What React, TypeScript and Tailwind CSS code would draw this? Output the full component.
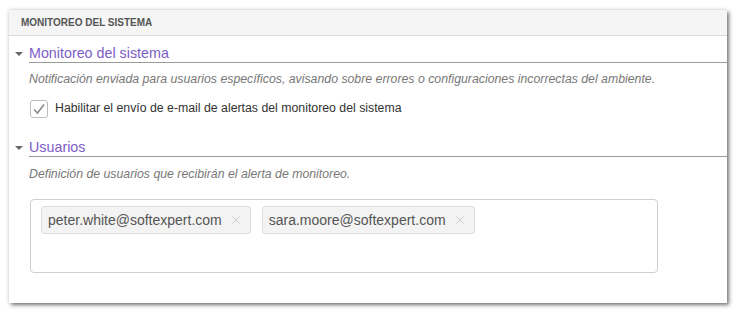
import React from 'react';

// Section header with collapse arrow and underline
const SectionTitle = ({ title }: { title: string }) => (
  <div className="flex items-end">
    <span className="w-[20px] pl-[6px] pb-[7px] flex">
      <span className="w-0 h-0 border-l-[4px] border-r-[4px] border-t-[4px] border-l-transparent border-r-transparent border-t-[#666]" />
    </span>
    <div className="flex-1 border-b border-[#9a9a9a] text-[14.3px] leading-[17px] text-[#7d5cc6]">{title}</div>
  </div>
);

const Tag = ({ email }: { email: string }) => (
  <div className="flex items-center h-[28px] pl-[6px] pr-[10px] rounded-[3px] border border-[#dcdcdc] bg-[#f3f3f3] text-[14px] text-[#555]">
    <span>{email}</span>
    <svg className="ml-[10px]" width="8" height="8" viewBox="0 0 8 8">
      <path d="M0.5 0.5 L7.5 7.5 M7.5 0.5 L0.5 7.5" stroke="#cfcfcf" strokeWidth="1" />
    </svg>
  </div>
);

export default function App() {
  return (
    <div className="w-[736px] h-[313px] bg-white pt-[10px] pl-[9px] pr-[9px] font-['Liberation_Sans',Arial,sans-serif]">
      <div className="h-[293px] bg-white shadow-[2px_2px_4px_rgba(0,0,0,0.55),-1px_-1px_4px_rgba(0,0,0,0.08)]">
        <div className="h-[26px] flex items-center pl-[12px] bg-[#f5f5f5] border-b border-[#dcdcdc] text-[10px] font-bold text-[#555]">
          MONITOREO DEL SISTEMA
        </div>

        <div className="pt-[9px]">
          <SectionTitle title="Monitoreo del sistema" />
          <div className="pl-[20px]">
            <p className="mt-[7px] text-[12.3px] italic text-[#777]">
              Notificación enviada para usuarios específicos, avisando sobre errores o configuraciones incorrectas del ambiente.
            </p>
            <label className="mt-[11px] flex items-center gap-[7px] text-[12.3px] text-[#333]">
              <span className="ml-[1px] w-[18px] h-[18px] rounded-[3px] border border-[#bdbdbd] bg-white flex items-center justify-center">
                <svg width="14" height="14" viewBox="0 0 14 14">
                  <path d="M2 7.5 L5.5 11 L12 2.5" fill="none" stroke="#8a8a8a" strokeWidth="1.6" />
                </svg>
              </span>
              Habilitar el envío de e-mail de alertas del monitoreo del sistema
            </label>
          </div>
        </div>

        <div className="pt-[21px]">
          <SectionTitle title="Usuarios" />
          <div className="pl-[20px]">
            <p className="mt-[8px] text-[12.3px] italic text-[#777]">
              Definición de usuarios que recibirán el alerta de monitoreo.
            </p>
            <div className="mt-[16px] ml-[1px] w-[628px] h-[74px] rounded-[4px] border border-[#cfcfcf] flex items-start gap-[11px] pt-[6px] pl-[10px]">
              <Tag email="peter.white@softexpert.com" />
              <Tag email="sara.moore@softexpert.com" />
            </div>
          </div>
        </div>
      </div>
    </div>
  );
}
